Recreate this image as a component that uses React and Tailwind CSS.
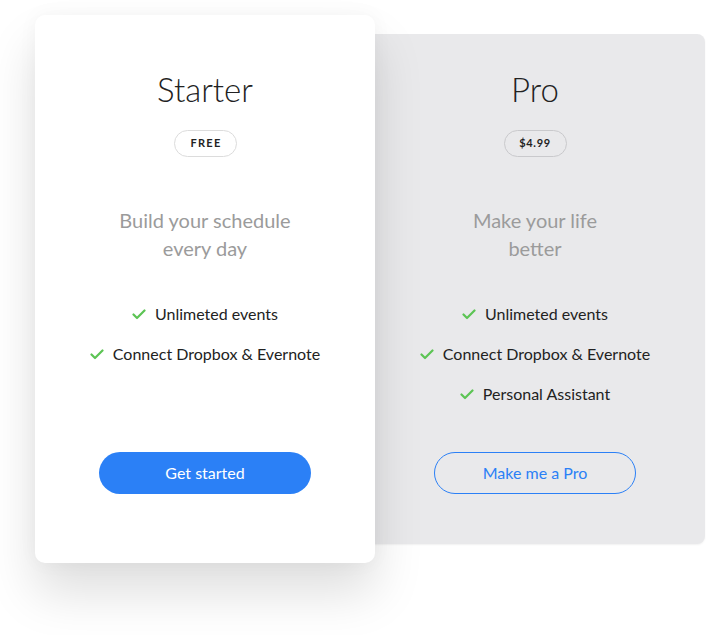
import React from 'react';

const plans = [
  {
    name: 'Starter',
    price: 'FREE',
    tagline: ['Build your schedule', 'every day'],
    features: ['Unlimeted events', 'Connect Dropbox & Evernote'],
    cta: 'Get started',
    featured: true,
  },
  {
    name: 'Pro',
    price: '$4.99',
    tagline: ['Make your life', 'better'],
    features: ['Unlimeted events', 'Connect Dropbox & Evernote', 'Personal Assistant'],
    cta: 'Make me a Pro',
    featured: false,
  },
];

function Check() {
  return (
    <svg width="14" height="11" viewBox="0 0 14 11" fill="none" className="shrink-0">
      <polyline points="1.5,5.5 5,9 12.5,1.5" stroke="#5cc454" strokeWidth="2.2" strokeLinecap="round" strokeLinejoin="round" />
    </svg>
  );
}

function PlanCard({ plan }) {
  const { featured } = plan;
  return (
    <div
      className={
        featured
          ? 'relative z-10 w-[340px] h-[548px] bg-white rounded-[10px] pt-[54px] flex flex-col items-center shadow-[0_30px_50px_rgba(0,0,0,0.13),0_0_20px_rgba(0,0,0,0.04)]'
          : 'relative -ml-[10px] w-[340px] h-[510px] bg-[#e9e9eb] rounded-[8px] pt-[35px] flex flex-col items-center shadow-[0_1px_2px_rgba(0,0,0,0.06)]'
      }
    >
      <h2 className="text-[33px] leading-[40px] font-light text-[#222]">{plan.name}</h2>

      <div
        className={
          'mt-[21px] h-[27px] w-[63px] rounded-full border flex items-center justify-center text-[11px] font-bold text-[#222] ' +
          (featured ? 'border-[#dcdcdc] tracking-[0.12em] pl-[2px]' : 'border-[#c9c9cc] tracking-[0.06em]')
        }
      >
        {plan.price}
      </div>

      <p className="mt-[49px] text-[20px] leading-[28px] text-[#9b9b9b] text-center">
        {plan.tagline[0]}
        <br />
        {plan.tagline[1]}
      </p>

      <ul className="mt-[40px] h-[120px] flex flex-col items-center">
        {plan.features.map((f) => (
          <li key={f} className="h-[40px] flex items-start gap-[9px] text-[16px] leading-[24px] text-[#222]">
            <span className="h-[24px] flex items-center">
              <Check />
            </span>
            {f}
          </li>
        ))}
      </ul>

      <button
        className={
          featured
            ? 'mt-[30px] w-[212px] h-[42px] rounded-full bg-[#2b80f6] text-white text-[16px]'
            : 'mt-[30px] w-[202px] h-[42px] rounded-full border border-[#2b80f6] text-[#2b80f6] text-[16px]'
        }
      >
        {plan.cta}
      </button>
    </div>
  );
}

export default function App() {
  return (
    <div className="min-h-[635px] w-[712px] bg-white font-['Lato','Liberation_Sans',sans-serif]">
      <div className="flex items-center pt-[15px] pl-[35px]">
        {plans.map((p) => (
          <PlanCard key={p.name} plan={p} />
        ))}
      </div>
    </div>
  );
}
